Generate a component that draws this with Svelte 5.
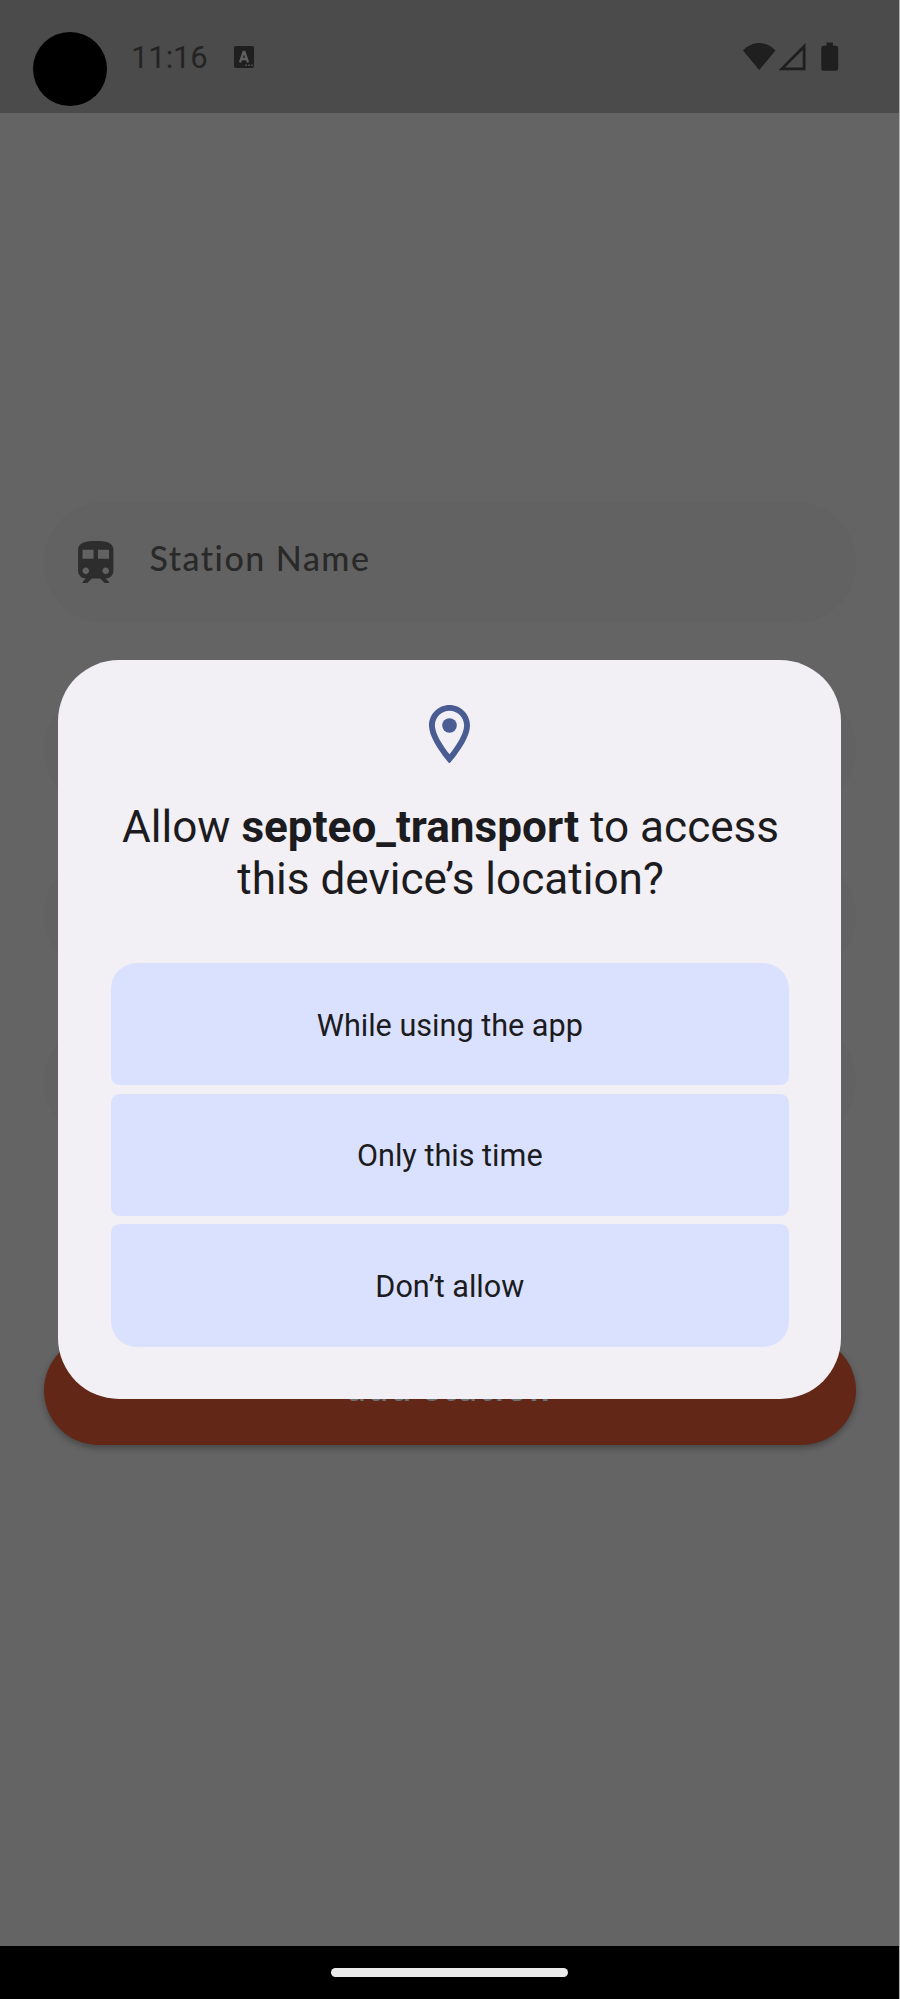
<script>
  const choices = ['While using the app', 'Only this time', 'Don’t allow'];
</script>

<div class="screen">
  <header class="status">
    <div class="camera"></div>
    <span class="clock">11:16</span>
    <svg class="lang" viewBox="0 0 20 22" width="20" height="22">
      <path d="M2 0h16a2 2 0 0 1 2 2v18a2 2 0 0 1-2 2H2a2 2 0 0 1-2-2V2a2 2 0 0 1 2-2Z" />
      <path d="M6 16.300 9.600 6h.8L14 16.300M7.300 13h5.400" fill="none" stroke="#606060" stroke-width="2.300" />
      <path d="M11 19.300h2M14 19.300h2M17 19.300h2" stroke="#4b4b4b" stroke-width="1.600" />
    </svg>
    <svg class="signals" viewBox="0 0 96 30" width="96" height="30">
      <path d="M0 8.500C9-1.500 23.500-1.500 32.500 8.500L16.200 28Z" />
      <path fill-rule="evenodd" d="M62.500 1v27.300H35.500ZM59.700 8 42 25.500h17.700Z" />
      <path d="M83.500.5h6.500v3.300h3a2.200 2.200 0 0 1 2.200 2.200v20.600a2.200 2.200 0 0 1-2.200 2.200H80.500a2.200 2.200 0 0 1-2.200-2.200V6a2.200 2.200 0 0 1 2.200-2.200h3Z" />
    </svg>
  </header>

  <main>
    <div class="field first">
      <svg viewBox="4 2 16 19" width="35.500" height="42">
        <path d="M12 2c-4 0-8 .5-8 4v9.500C4 17.430 5.570 19 7.500 19L6 20.500v.5h2.230l2-2H14l2 2h2v-.5L16.500 19c1.930 0 3.500-1.570 3.500-3.500V6c0-3.500-3.580-4-8-4ZM7.500 17c-.83 0-1.500-.67-1.500-1.500S6.670 14 7.500 14s1.500.67 1.500 1.500S8.330 17 7.500 17Zm3.500-7H6V6h5v4Zm2 0V6h5v4h-5Zm3.500 7c-.83 0-1.500-.67-1.500-1.500s.67-1.500 1.500-1.500 1.500.67 1.500 1.500-.67 1.500-1.500 1.500Z" />
      </svg>
      <span>Station Name</span>
    </div>
    <div class="field"></div>
    <div class="field"></div>
    <div class="field"></div>
    <div class="submit">add station</div>
  </main>

  <div class="dialog">
    <svg class="pin" viewBox="5 2 14 20" width="41" height="58.500">
      <path d="M12 2C8.130 2 5 5.130 5 9c0 5.250 7 13 7 13s7-7.750 7-13c0-3.870-3.130-7-7-7ZM7 9c0-2.760 2.240-5 5-5s5 2.240 5 5c0 2.880-2.880 7.190-5 9.880C9.920 16.210 7 11.850 7 9Z" />
      <circle cx="12" cy="9" r="2.500" />
    </svg>
    <h1>Allow <b>septeo_transport</b> to access<br />this device’s location?</h1>
    <div class="choices">
      {#each choices as choice}
        <button>{choice}</button>
      {/each}
    </div>
  </div>

  <footer><i></i></footer>
</div>

<style>
  :global(body) { margin: 0; background: #b2b2b2; }
  .screen {
    position: relative;
    display: flex;
    flex-direction: column;
    width: 899px;
    height: 1999px;
    overflow: hidden;
    background: #646464;
    font-family: Roboto, sans-serif;
  }
  .status {
    display: flex;
    align-items: flex-start;
    flex: none;
    height: 113px;
    box-sizing: border-box;
    padding: 32px 0 0 33px;
    background: #4b4b4b;
    fill: #1f1f1f;
  }
  .camera { width: 74px; height: 74px; border-radius: 50%; background: #000; }
  .clock { margin: 8px 0 0 24px; width: 103px; font-size: 31px; line-height: 36px; color: #242424; letter-spacing: -.1px; white-space: nowrap; }
  .lang { margin-top: 14px; }
  .signals { margin: 10px 60px 0 auto; }
  main { flex: 1; padding: 389px 43px 0 44px; }
  .field {
    display: flex;
    align-items: center;
    height: 121px;
    box-sizing: border-box;
    margin-bottom: 45px;
    padding-left: 34px;
    border-radius: 61px;
    background: #626262;
  }
  .field.first { margin-bottom: 66px; }
  .field svg { margin-top: -2px; fill: #2d2d2d; }
  .field span {
    margin: -10px 0 0 36px;
    color: #292929;
    font: 500 34px Lato, sans-serif;
    letter-spacing: 1.500px;
    white-space: nowrap;
  }
  .submit {
    height: 109px;
    margin-top: 194px;
    border-radius: 55px;
    background: #622716;
    color: #6c7377;
    font: 700 35px/103px Lato, sans-serif;
    letter-spacing: 2.800px;
    text-align: center;
    box-shadow: 0 3px 6px rgba(0, 0, 0, .3);
  }
  .dialog {
    position: absolute;
    left: 58.300px;
    top: 659.600px;
    width: 783px;
    height: 739.500px;
    box-sizing: border-box;
    padding: 45px 52.500px 0;
    border-radius: 61px;
    background: #f2eff5;
    display: flex;
    flex-direction: column;
    align-items: center;
  }
  .pin { fill: #495d92; }
  h1 {
    margin: 38px 0 0 1.500px;
    font-size: 44.100px;
    line-height: 52px;
    font-weight: 400;
    color: #1b1b20;
    text-align: center;
    white-space: nowrap;
  }
  .choices { display: flex; flex-direction: column; gap: 8.400px; width: 678px; margin-top: 57.800px; }
  button {
    height: 122.300px;
    padding: 2px 0 0;
    border: 0;
    border-radius: 8.700px;
    background: #dae1ff;
    color: #1b1b20;
    font: 400 30.600px Roboto, sans-serif;
  }
  button:first-child { border-top-left-radius: 26px; border-top-right-radius: 26px; }
  button:last-child { border-bottom-left-radius: 26px; border-bottom-right-radius: 26px; }
  footer {
    display: flex;
    justify-content: center;
    flex: none;
    height: 53px;
    box-sizing: border-box;
    padding-top: 22px;
    background: #000;
  }
  footer i { width: 237px; height: 9px; border-radius: 5px; background: #ebebeb; }
</style>
